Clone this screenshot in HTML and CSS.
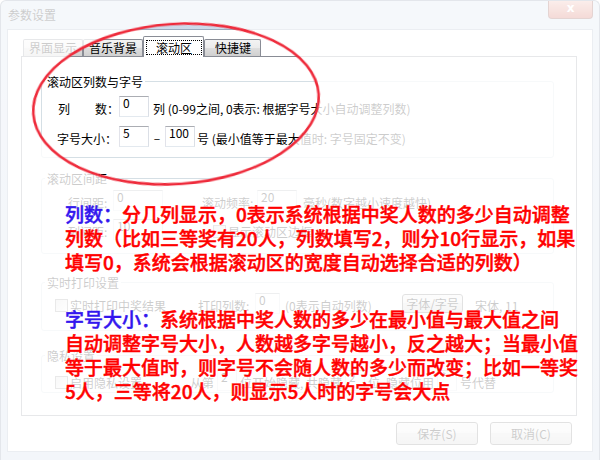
FILE: index.html
```html
<!DOCTYPE html>
<html lang="zh-CN">
<head>
<meta charset="utf-8">
<title>参数设置</title>
<link rel="stylesheet" href="styles.css">
</head>
<body>
<div class="window">
  <div class="titlebar">
    <span class="title">参数设置</span>
    <span class="close">x</span>
  </div>
  <div class="client">
    <div class="tabs">
      <div class="tab">界面显示</div>
      <div class="tab">音乐背景</div>
      <div class="tab active"><span class="focus">滚动区</span></div>
      <div class="tab tab-last">快捷键</div>
    </div>
    <div class="panel">
      <fieldset class="group g1">
        <legend>滚动区列数与字号</legend>
        <div class="row r-main">
          <span class="lbl lbl-split"><span>列</span><span>数：</span></span>
          <span class="tb w30">0</span>
          <span class="txt ml4">列 (0-99之间, 0表示: 根据字号大小自动调整列数)</span>
        </div>
        <div class="row r-main r-gap9">
          <span class="lbl">字号大小：</span>
          <span class="tb w30">5</span>
          <span class="dash">–</span>
          <span class="tb w30">100</span>
          <span class="txt ml2">号 (最小值等于最大值时: 字号固定不变)</span>
        </div>
      </fieldset>

      <fieldset class="group g2">
        <legend>滚动区间距</legend>
        <div class="row r-g2">
          <span class="txt wl45">行间距:</span>
          <span class="tb w50">0</span>
          <span class="txt wl55 ml39">滚动频率:</span>
          <span class="tb w40">20</span>
          <span class="txt ml6">毫秒(数字越小速度越快)</span>
        </div>
        <div class="row r-g2 r-gap8">
          <span class="txt wl45">列间距:</span>
          <span class="tb w50">10</span>
          <span class="cb ml50"></span>
          <span class="txt ml2">显示滚动区边框</span>
        </div>
      </fieldset>

      <fieldset class="group g3">
        <legend>实时打印设置</legend>
        <div class="row r-chk">
          <span class="cb"></span>
          <span class="txt ml2 wl128">实时打印中奖结果</span>
          <span class="txt wl57">打印列数:</span>
          <span class="tb w25">0</span>
          <span class="txt ml5 wl117">(0表示自动列数)</span>
          <span class="btn-sm">字体/字号</span>
          <span class="txt ml12">宋体, 11</span>
        </div>
      </fieldset>

      <fieldset class="group g4">
        <legend>隐私设置</legend>
        <div class="row r-chk">
          <span class="cb"></span>
          <span class="txt ml2 wl120">启用隐私设置</span>
          <span class="txt">从第</span>
          <span class="tb w20 ml3">2</span>
          <span class="txt ml3">位开始隐藏, 共隐藏</span>
          <span class="tb w20 ml3">2</span>
          <span class="txt ml3">位, 隐藏位用</span>
          <span class="tb w20 ml3">*</span>
          <span class="txt ml3">号代替</span>
        </div>
      </fieldset>
    </div>
    <div class="buttons">
      <span class="btn">保存(S)</span>
      <span class="btn">取消(C)</span>
    </div>
  </div>

  <svg class="overlay" width="600" height="460" viewBox="0 0 600 460" xmlns="http://www.w3.org/2000/svg">
    <defs>
      <filter id="soft" x="-10%" y="-20%" width="120%" height="140%">
        <feGaussianBlur stdDeviation="0.6"/>
      </filter>
    </defs>
    <path fill="#ffffff" fill-opacity="0.8" fill-rule="evenodd"
      d="M0 0H600V460H0Z M33.35 113.98 A143 80 -4 1 0 318.65 94.02 A143 80 -4 1 0 33.35 113.98Z"/>
    <ellipse cx="176" cy="104" rx="143" ry="80" transform="rotate(-4 176 104)"
      fill="none" stroke="#ee2a3a" stroke-width="2.6" filter="url(#soft)"/>
  </svg>

  <div class="notes">
    <div class="note">
      <div class="ln"><span class="key">列数：</span>分几列显示，0表示系统根据中奖人数的多少自动调整</div>
      <div class="ln">列数（比如三等奖有20人，列数填写2，则分10行显示，如果</div>
      <div class="ln">填写0，系统会根据滚动区的宽度自动选择合适的列数）</div>
    </div>
    <div class="note n2">
      <div class="ln"><span class="key">字号大小：</span>系统根据中奖人数的多少在最小值与最大值之间</div>
      <div class="ln">自动调整字号大小，人数越多字号越小，反之越大；当最小值</div>
      <div class="ln">等于最大值时，则字号不会随人数的多少而改变；比如一等奖</div>
      <div class="ln">5人，三等将20人，则显示5人时的字号会大点</div>
    </div>
  </div>
</div>
</body>
</html>
```

FILE: styles.css
```css
* { box-sizing: border-box; }
html, body { margin: 0; padding: 0; }
body {
  width: 600px;
  height: 460px;
  overflow: hidden;
  background: #ffffff;
  font-family: "Noto Sans CJK SC", "Noto Sans", sans-serif;
  font-size: 12px;
  color: #000;
}

.window {
  position: relative;
  width: 600px;
  height: 460px;
  display: flex;
  flex-direction: column;
  background: linear-gradient(#cddaea, #c3d2e4);
  border: 1px solid #72849a;
  border-bottom: 0;
  border-radius: 6px 6px 0 0;
  padding: 0 6px;
}

.titlebar {
  height: 28px;
  flex: none;
  display: flex;
  justify-content: space-between;
  align-items: flex-start;
  padding-left: 1px;
}
.title { line-height: 28px; color: #000; }
.close {
  width: 45px;
  height: 18px;
  border: 1px solid #7a2a22;
  border-top: 0;
  border-radius: 0 0 4px 4px;
  background: linear-gradient(#e9a698, #c84a39);
  color: #fff;
  font-weight: bold;
  text-align: center;
  line-height: 15px;
  font-family: "DejaVu Sans", sans-serif;
}

.client {
  flex: none;
  width: 586px;
  height: 423px;
  background: #fff;
  border: 1px solid #9aaabd;
}

.tabs {
  height: 26px;
  display: flex;
  align-items: flex-end;
  padding-left: 15px;
}
.tab {
  height: 17px;
  padding: 0 5px;
  border: 1px solid #898c95;
  border-bottom: 0;
  border-radius: 2px 2px 0 0;
  background: linear-gradient(#f3f3f3 0%, #ebebeb 50%, #dedede 50%, #d0d0d0 100%);
  line-height: 16px;
  white-space: nowrap;
}
.tab.active {
  position: relative;
  height: 21px;
  margin-bottom: -1px;
  padding: 3px 1px 0 2px;
  background: #fff;
}
.tab-last { padding: 0 9px 0 10px; }
.focus {
  display: block;
  height: 15px;
  padding: 0 9px;
  border: 1px dotted #000;
  line-height: 13px;
}

.panel {
  width: 556px;
  height: 360px;
  margin-left: 13px;
  border: 1px solid #898c95;
  background: #fff;
}

.group {
  width: 513px;
  margin: 0 0 0 19px;
  padding: 0;
  border: 1px solid #d5dfe5;
  border-radius: 3px;
  min-inline-size: 0;
}
.group legend {
  margin-left: 3px;
  padding: 0 2px;
  line-height: 13px;
  color: #000;
}
.g1 { margin-top: 18px; padding-bottom: 10px; }
.g2 { margin-top: 14px; padding-bottom: 13px; }
.g3 { margin-top: 22px; padding-bottom: 16px; }
.g4 { margin-top: 18px; padding-bottom: 1px; }

.row {
  height: 21px;
  display: flex;
  align-items: flex-start;
  white-space: nowrap;
}
.r-main { padding-left: 15px; }
.g1 .r-main:first-of-type { margin-top: 8px; }
.r-gap9 { margin-top: 9px; }
.r-g2 { padding-left: 26px; }
.g2 .r-g2:first-of-type { margin-top: 5px; }
.r-gap8 { margin-top: 8px; }
.r-chk { padding-left: 13px; }
.g3 .r-chk { margin-top: 4px; }
.g4 .r-chk { margin-top: 8px; }

.lbl, .txt { line-height: 25px; }
.lbl { width: 62px; }
.lbl-split { display: flex; justify-content: space-between; padding-left: 1px; }

.tb {
  height: 21px;
  flex: none;
  border: 1px solid;
  border-color: #abadb3 #dbdfe6 #e3e9ef #e2e3ea;
  background: #fff;
  padding: 0 0 0 3px;
  line-height: 12px;
}
.w20 { width: 20px; }
.w25 { width: 25px; }
.w30 { width: 30px; }
.w40 { width: 40px; }
.w50 { width: 50px; }

.dash { width: 16px; text-align: center; line-height: 23px; }

.wl45 { width: 45px; }
.wl55 { width: 55px; }
.wl57 { width: 57px; }
.wl117 { width: 117px; }
.wl120 { width: 120px; }
.wl128 { width: 128px; }
.ml2 { margin-left: 2px; }
.ml3 { margin-left: 3px; }
.ml4 { margin-left: 4px; }
.ml5 { margin-left: 5px; }
.ml6 { margin-left: 6px; }
.ml12 { margin-left: 12px; }
.ml39 { margin-left: 39px; }
.ml50 { margin-left: 50px; }

.cb {
  width: 13px;
  height: 13px;
  flex: none;
  margin-top: 6px;
  border: 1px solid #8f8f8f;
  background: linear-gradient(135deg, #dcdcdc, #fbfbfb);
}

.btn-sm {
  width: 61px;
  height: 19px;
  margin-top: 1px;
  border: 1px solid #707070;
  border-radius: 3px;
  background: linear-gradient(#f2f2f2 0%, #ebebeb 50%, #dddddd 50%, #cfcfcf 100%);
  text-align: center;
  line-height: 17px;
}

.buttons {
  display: flex;
  justify-content: flex-end;
  gap: 12px;
  margin-top: 6px;
  padding-right: 20px;
}
.btn {
  width: 82px;
  height: 23px;
  border: 1px solid #707070;
  border-radius: 3px;
  background: linear-gradient(#f2f2f2 0%, #ebebeb 50%, #dddddd 50%, #cfcfcf 100%);
  text-align: center;
  line-height: 21px;
}

.overlay {
  position: absolute;
  left: -1px;
  top: -1px;
}

.notes {
  position: absolute;
  left: 64px;
  top: 201px;
  font-size: 19px;
  line-height: 24px;
  font-weight: 500;
  color: #ff0000;
  -webkit-text-stroke: 0.45px #ff0000;
  white-space: nowrap;
}
.n2 { margin-top: 33px; }
.key { color: #3316ee; -webkit-text-stroke-color: #3316ee; }
```
